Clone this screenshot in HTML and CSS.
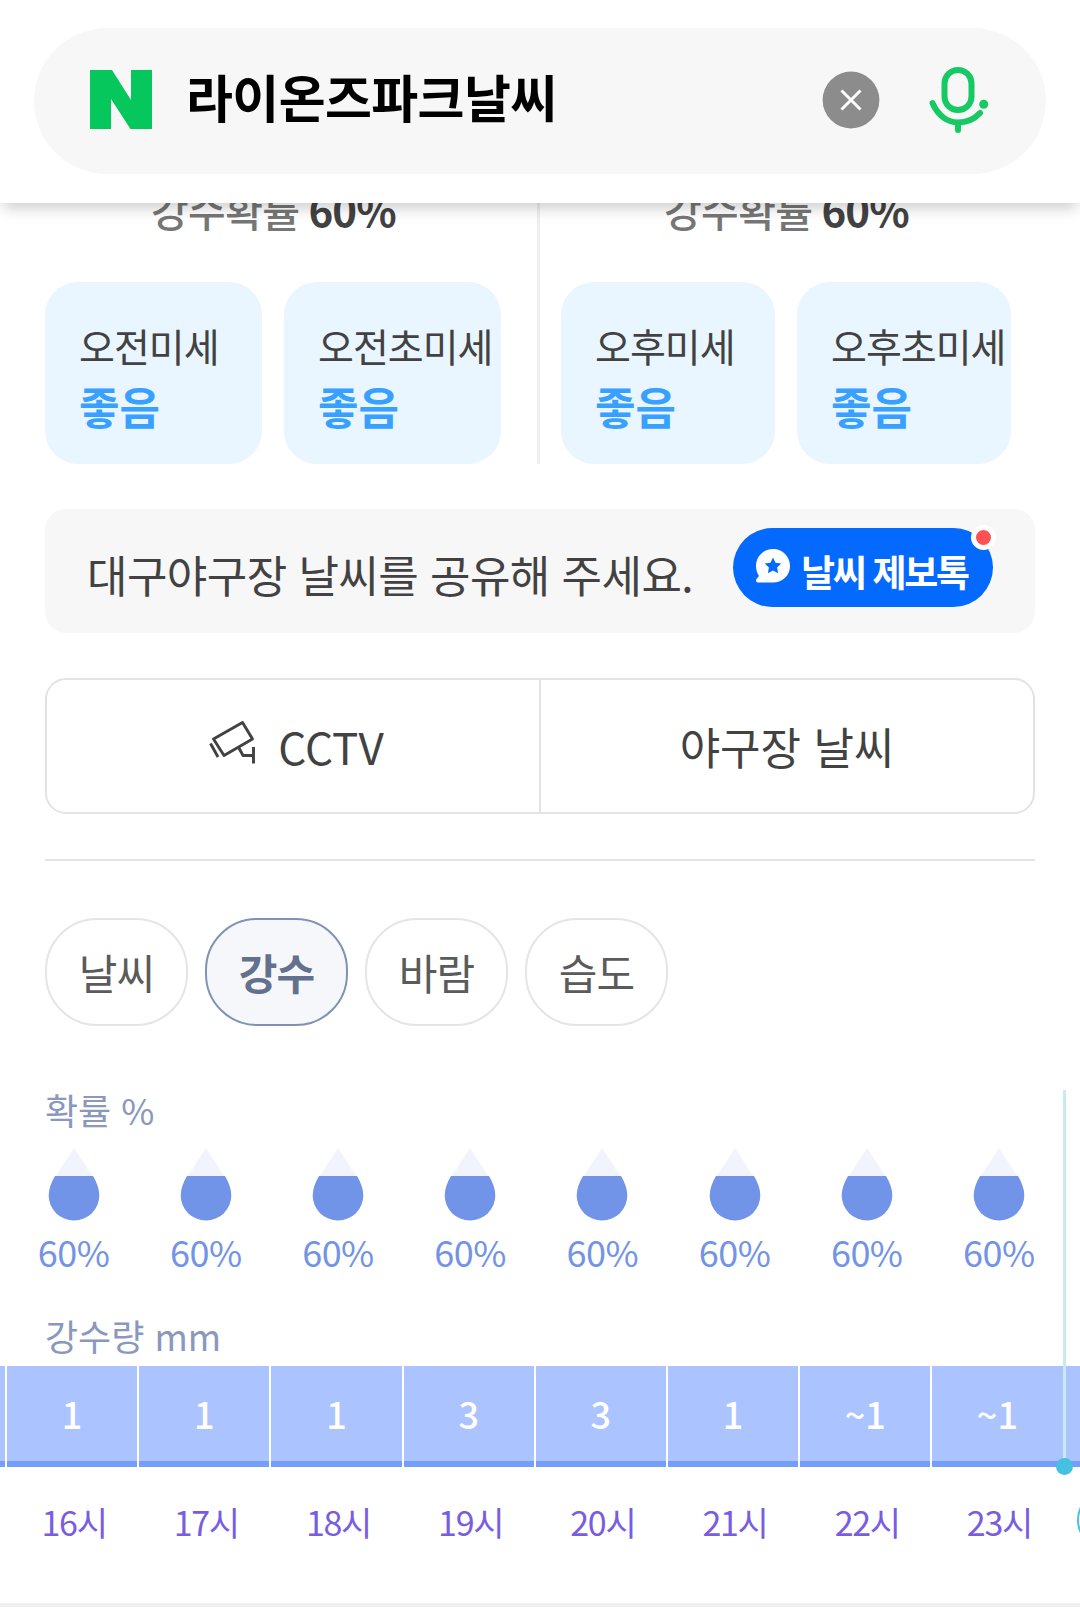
FILE: index.html
```html
<!DOCTYPE html>
<html lang="ko">
<head>
<meta charset="utf-8">
<title>라이온즈파크날씨</title>
<link rel="stylesheet" href="styles.css">
</head>
<body>
<svg class="defs" width="0" height="0" aria-hidden="true">
  <symbol id="drop" viewBox="0 0 52 74">
    <path d="M26 1 L44.500 29.500 H7.500 Z" fill="#f1f4fc"/>
    <path d="M7 29 H45 C49 36 51.300 42 51.300 48.500 A25.300 25 0 0 1 .7 48.500 C.7 42 3 36 7 29 Z" fill="#7194e9"/>
  </symbol>
</svg>
<header class="header">
  <div class="search">
    <svg class="logo" width="62" height="59" viewBox="0 0 62 59"><path d="M0 0H22L41 30V0H62V59H40.500L21 29V59H0Z" fill="#06c75b"/></svg>
    <span class="query">라이온즈파크날씨</span>
    <svg class="clear" width="58" height="58" viewBox="0 0 58 58"><circle cx="29" cy="29" r="28.400" fill="#8c8c8c"/><path d="M19.500 19.500l19 19m0-19l-19 19" stroke="#fff" stroke-width="3" fill="none"/></svg>
    <svg class="mic" width="60" height="68" viewBox="0 0 60 68" fill="none" stroke="#17c963" stroke-width="6" stroke-linecap="round"><rect x="15.500" y="4" width="27" height="40" rx="13.500"/><path d="M3.500 37C9 50 19 56.500 29 56.500C38 56.500 45.500 53 51 47M29 57v7"/><circle cx="54.700" cy="38.300" r="4.500" fill="#17c963" stroke="none"/></svg>
  </div>
</header>
<main>
  <section class="forecast">
    <div class="half am">
      <p class="chance">강수확률 <b>60%</b></p>
      <div class="cards">
        <div class="card"><span>오전미세</span><b>좋음</b></div>
        <div class="card"><span>오전초미세</span><b>좋음</b></div>
      </div>
    </div>
    <div class="half pm">
      <p class="chance">강수확률 <b>60%</b></p>
      <div class="cards">
        <div class="card"><span>오후미세</span><b>좋음</b></div>
        <div class="card"><span>오후초미세</span><b>좋음</b></div>
      </div>
    </div>
  </section>
  <section class="share">
    <p>대구야구장 날씨를 공유해 주세요.</p>
    <a class="talk">
      <svg width="36" height="36" viewBox="0 0 36 36"><path d="M18 1C27.500 1 35 8.500 35 18S27.500 34.500 18 34.500H3C1 34.500.5 32.500 1.500 31L4 28C2 25 1 21.500 1 18C1 8.500 8.500 1 18 1Z" fill="#fff"/><path d="M18 9.500l2.500 5.200 5.700.8-4.100 4 1 5.700-5.100-2.700-5.100 2.700 1-5.700-4.100-4 5.700-.8Z" fill="#0469ff"/></svg>
      <span>날씨 제보톡</span>
      <i class="new"></i>
    </a>
  </section>
  <nav class="links">
    <a class="cctv"><svg width="48" height="46" viewBox="0 0 48 46" fill="none" stroke="#424242" stroke-width="2.900" stroke-linejoin="round"><path d="M5.500 19L34.500 2.500L44.500 19L16 35.500ZM2.500 23.500L10 37M31 28L35 35.500H45M45.500 27V43.500"/></svg><span>CCTV</span></a>
    <a>야구장 날씨</a>
  </nav>
  <hr>
  <div class="tabs">
    <span class="tab">날씨</span><span class="tab on">강수</span><span class="tab">바람</span><span class="tab">습도</span>
  </div>
  <section class="rain">
    <h3 class="label">확률 %</h3>
    <div class="row chances">
      <div><svg width="52" height="74"><use href="#drop"/></svg>60%</div>
      <div><svg width="52" height="74"><use href="#drop"/></svg>60%</div>
      <div><svg width="52" height="74"><use href="#drop"/></svg>60%</div>
      <div><svg width="52" height="74"><use href="#drop"/></svg>60%</div>
      <div><svg width="52" height="74"><use href="#drop"/></svg>60%</div>
      <div><svg width="52" height="74"><use href="#drop"/></svg>60%</div>
      <div><svg width="52" height="74"><use href="#drop"/></svg>60%</div>
      <div><svg width="52" height="74"><use href="#drop"/></svg>60%</div>
    </div>
    <h3 class="label amount">강수량 mm</h3>
    <div class="row bars"><div>1</div><div>1</div><div>1</div><div>3</div><div>3</div><div>1</div><div>~1</div><div>~1</div></div>
    <div class="row hours"><div>16시</div><div>17시</div><div>18시</div><div>19시</div><div>20시</div><div>21시</div><div>22시</div><div>23시</div></div>
    <i class="dayline"></i>
    <i class="daydot"></i>
    <div class="dayclip"><i class="daybadge"></i></div>
  </section>
</main>
</body>
</html>
```
FILE: styles.css
```css
* { box-sizing: border-box; margin: 0; padding: 0; }
html, body { overflow: hidden; }
body { width: 1080px; height: 1607px; background: #fff; color: #424242; font-family: "Noto Sans CJK KR", sans-serif; white-space: nowrap; }
svg { display: block; flex: none; }
.defs { position: absolute; }

.header { position: relative; z-index: 2; height: 203px; padding: 28px 34px; background: #fff; box-shadow: 0 8px 14px -3px rgba(0,0,0,.2); }
.search { display: flex; align-items: center; height: 146px; padding: 0 57px 0 56px; border-radius: 73px; background: #f7f7f7; }
.logo { margin-top: -4px; }
.query { margin-left: 34px; font-size: 51px; font-weight: 700; line-height: 74px; letter-spacing: -.6px; color: #000; margin-top: -10px; }
.clear { margin-left: auto; margin-top: -2px; }
.mic { margin-left: 49px; margin-top: -2px; }

main { display: flex; flex-direction: column; }
.forecast { display: flex; height: 261px; padding-left: 45px; }
.half { display: flex; flex-direction: column; }
.am { width: 495px; border-right: 3px solid #eee; }
.pm { padding-left: 21px; }
.chance { height: 79px; margin-top: -22px; margin-bottom: 22px; line-height: 56px; font-size: 41px; letter-spacing: -.6px; font-weight: 500; color: #767676; padding-left: 106px; }
.pm .chance { padding-left: 103px; }
.chance b { font-size: 42px; letter-spacing: -.8px; font-weight: 700; color: #424242; margin-left: -2px; }
.cards { display: flex; gap: 22px; }
.card { display: flex; flex-direction: column; width: 217px; height: 182px; padding: 35px 0 0 34px; border-radius: 33px; background: #e9f6ff; }
.pm .card { width: 214px; }
.pm .cards { gap: 22px; }
.card span { font-size: 39px; line-height: 56px; letter-spacing: -1px; }
.card b { font-size: 44px; line-height: 66px; font-weight: 700; color: #38a0ff; }

.share { display: flex; justify-content: space-between; height: 124px; margin: 45px 45px 0; padding: 19px 42px 0 42px; border-radius: 21px; background: #f7f7f7; }
.share p { font-size: 44px; line-height: 92px; letter-spacing: -.55px; }
.talk { position: relative; display: flex; align-items: center; width: 260px; height: 79px; padding-left: 22px; border-radius: 40px; background: #0469ff; color: #fff; font-size: 37px; font-weight: 700; letter-spacing: -2.300px; line-height: 79px; }
.talk span { margin-top: 7px; }
.talk svg { margin-top: -3px; margin-right: 10px; }
.new { position: absolute; right: -3px; top: -3px; width: 25px; height: 25px; border: 5.500px solid #fff; border-radius: 50%; background: #ff5151; }

.links { display: flex; height: 136px; margin: 45px 45px 0; border: 2px solid #e3e3e3; border-radius: 21px; font-size: 44px; line-height: 133px; letter-spacing: 0; }
.links a { display: flex; flex: 1; justify-content: center; }
.links .cctv { flex: none; width: 494px; padding-left: 6px; border-right: 2px solid #e3e3e3; }
.cctv svg { margin: 40px 22px 0 0; }
hr { height: 2px; margin: 45px 45px 0; border: 0; background: #e3e3e3; }

.tabs { display: flex; gap: 17px; margin: 57px 45px 0; }
.tab { width: 143px; height: 108px; border: 2px solid #e5e5e5; border-radius: 52px; text-align: center; font-size: 42px; line-height: 103px; letter-spacing: -1px; color: #5b5b5b; }
.on { border-color: #8093b5; background: #f5f7fa; color: #63718d; font-weight: 700; }

.rain { position: relative; height: 581px; padding-top: 57px; border-bottom: 4px solid #efefef; }
.label { height: 56px; padding-left: 45px; font-size: 36px; line-height: 52px; font-weight: 400; color: #8998bc; }
.row { display: grid; grid-template-columns: repeat(8, 132.200px); }
.chances { margin: 8px 0 0 7.500px; color: #7394e6; font-size: 36px; line-height: 61px; text-align: center; letter-spacing: -.5px; }
.chances svg { margin: 0 auto; }
.amount { margin-top: 27px; height: 57px; }
.bars { height: 101px; width: 1080px; padding-left: 5px; background: linear-gradient(#abc4ff 95px, #759efb 95px); color: #fff; font-size: 36px; line-height: 95px; font-weight: 500; text-align: center; }
.bars div { border-left: 2px solid #fff; }
.hours { margin: 26px 0 0 8px; color: #795de1; font-size: 34px; line-height: 58px; text-align: center; letter-spacing: -1.300px; }
.dayline { position: absolute; left: 1063px; top: 64px; width: 3px; height: 370px; background: #c8eaf3; }
.daydot { position: absolute; left: 1056px; top: 432px; width: 17px; height: 17px; border-radius: 50%; background: #45c0df; }
.dayclip { position: absolute; right: 0; top: 464px; width: 3px; height: 60px; overflow: hidden; }
.daybadge { display: block; width: 60px; height: 60px; border: 2.500px solid #45c0df; border-radius: 50%; }
```
